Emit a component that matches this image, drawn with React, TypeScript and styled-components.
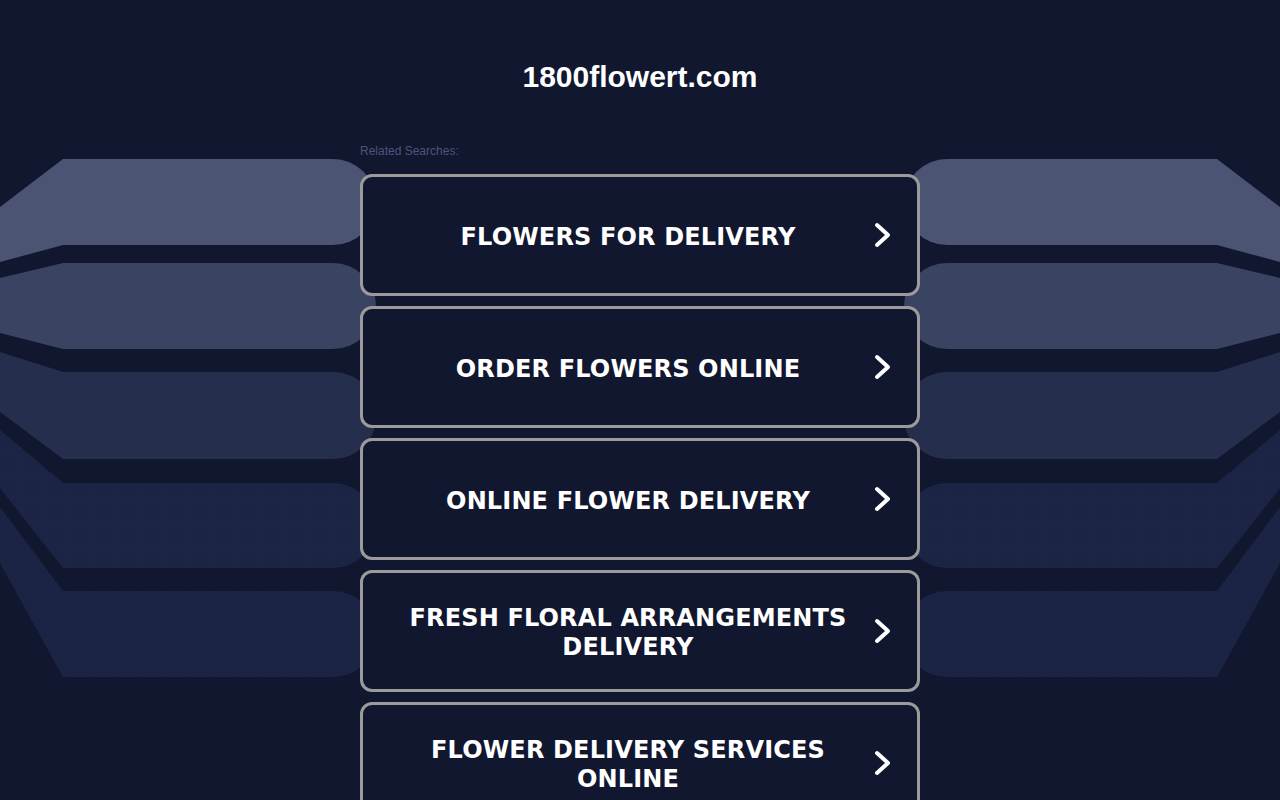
import React, {FC} from 'react';
import styled, {createGlobalStyle} from 'styled-components';

const GlobalStyle=createGlobalStyle`
html,body{
margin:0;
padding:0;
background:#11172f;
}
body{
font-family:"Liberation Sans",Arial,sans-serif;
}
`;

const Page=styled.div`
position:relative;
width:100%;
min-height:800px;
overflow:hidden;
background:#11172f;
`;

const Backdrop=styled.svg`
position:absolute;
top:0;
left:0;
width:1280px;
height:800px;
z-index:0;
`;

const Content=styled.div`
position:relative;
z-index:1;
display:flex;
flex-direction:column;
align-items:center;
padding-top:59px;
`;

const Title=styled.h1`
margin:0;
font-family:"Liberation Sans",Arial,sans-serif;
font-weight:bold;
font-size:30px;
line-height:36px;
color:#ffffff;
`;

const List=styled.div`
display:flex;
flex-direction:column;
width:560px;
margin-top:49px;
`;

const Caption=styled.div`
font-family:"Liberation Sans",Arial,sans-serif;
font-size:12px;
line-height:14px;
color:#4c5677;
margin-bottom:16px;
`;

const Card=styled.a`
display:flex;
align-items:center;
box-sizing:border-box;
height:122px;
margin-bottom:10px;
border:3px solid #9b9b9b;
border-radius:12px;
background:#11172f;
text-decoration:none;
padding:0 26px 0 21px;
`;

const Label=styled.span`
flex:1;
text-align:center;
font-family:"DejaVu Sans",Verdana,sans-serif;
font-weight:bold;
font-size:24px;
line-height:29px;
letter-spacing:0.15px;
color:#ffffff;
text-transform:uppercase;
padding:4px 20px 0;
`;

const Arrow=styled.svg`
flex:none;
width:19px;
height:28px;
`;

type Shape={T:number;B:number;yt:number;yb:number;fill:string};

const shapes:Shape[]=[
    {T:159,B:245,yt:207,yb:262,fill:'#4b5573'},
    {T:263,B:349,yt:278,yb:333,fill:'#3a4361'},
    {T:372,B:459,yt:352,yb:412,fill:'#262e4d'},
    {T:483,B:568,yt:430,yb:488,fill:'url(#dots4)'},
    {T:591,B:677,yt:507,yb:563,fill:'url(#dots5)'},
];

const shapePath=(s:Shape)=>{
    const r=(s.B-s.T)/2;
    return `M0,${s.yt} L63,${s.T} L333,${s.T} A${r},${r} 0 0 1 333,${s.B} L63,${s.B} L0,${s.yb} Z`;
};

const Fan:FC=()=>(
    <g>
        {shapes.map((s,i)=>(
            <path key={i} d={shapePath(s)} fill={s.fill} />
        ))}
    </g>
);

const searches=[
    'Flowers for Delivery',
    'Order Flowers Online',
    'Online Flower Delivery',
    'Fresh Floral Arrangements Delivery',
    'Flower Delivery Services Online',
];

const App:FC=()=>{
    return(
        <Page>
            <GlobalStyle />
            <Backdrop viewBox='0 0 1280 800'>
                <defs>
                    <pattern id='dots4' width='3' height='3' patternUnits='userSpaceOnUse'>
                        <rect width='3' height='3' fill='#1d2546' />
                        <rect width='1' height='1' fill='#19203d' />
                    </pattern>
                    <pattern id='dots5' width='3' height='3' patternUnits='userSpaceOnUse'>
                        <rect width='3' height='3' fill='#1b2445' />
                        <rect width='1' height='1' fill='#171f3c' />
                    </pattern>
                </defs>
                <Fan />
                <g transform='translate(1280,0) scale(-1,1)'>
                    <Fan />
                </g>
            </Backdrop>
            <Content>
                <Title>1800flowert.com</Title>
                <List>
                    <Caption>Related Searches:</Caption>
                    {searches.map(s=>(
                        <Card key={s} href='#'>
                            <Label>{s}</Label>
                            <Arrow viewBox='0 0 19 28'>
                                <path d='M5 4 L16 14 L5 24' fill='none' stroke='#ffffff' strokeWidth='4' strokeLinecap='round' strokeLinejoin='round' />
                            </Arrow>
                        </Card>
                    ))}
                </List>
            </Content>
        </Page>
    );
}

export default App;
